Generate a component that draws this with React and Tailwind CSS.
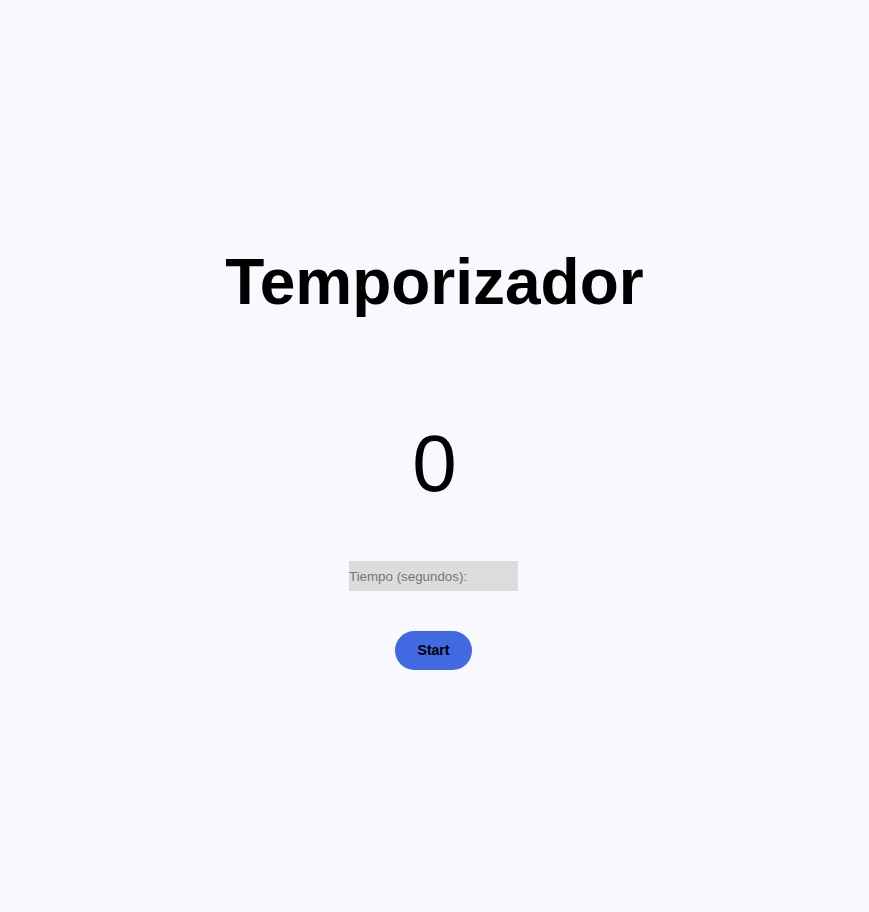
import React, { useState } from 'react';

export default function App() {
  const [seconds, setSeconds] = useState('');
  const [count, setCount] = useState(0);

  return (
    <div className="min-h-screen bg-[#f8f8ff] flex flex-col items-center pt-[245px] font-['Liberation_Sans',Arial,sans-serif] text-black">
      <h1 className="text-[64px] font-bold leading-[74px]">Temporizador</h1>
      <div className="mt-[99px] text-[80px] leading-[92px]">{count}</div>
      <input
        type="number"
        value={seconds}
        onChange={(e) => setSeconds(e.target.value)}
        placeholder="Tiempo (segundos):"
        className="mt-[51px] -translate-x-px w-[169px] h-[30px] bg-[#dcdcdc] text-[13.33px] placeholder:text-[#757575] outline-none"
      />
      <button
        onClick={() => setCount(Number(seconds) || 0)}
        className="mt-[40px] -translate-x-px w-[77px] h-[39px] rounded-full bg-[#4169e1] text-[14px] font-bold"
      >
        Start
      </button>
    </div>
  );
}
